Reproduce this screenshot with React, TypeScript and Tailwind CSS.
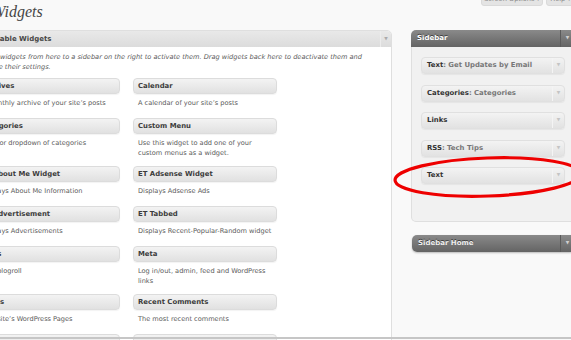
import React from "react";

type Widget = { title: string; desc: React.ReactNode; tall?: boolean };

const rows: Widget[][] = [
  [
    { title: "Archives", desc: "A monthly archive of your site\u2019s posts" },
    { title: "Calendar", desc: "A calendar of your site\u2019s posts" },
  ],
  [
    { title: "Categories", desc: "A list or dropdown of categories" },
    {
      title: "Custom Menu",
      desc: (
        <>
          Use this widget to add one of your
          <br />
          custom menus as a widget.
        </>
      ),
      tall: true,
    },
  ],
  [
    { title: "ET About Me Widget", desc: "Displays About Me Information" },
    { title: "ET Adsense Widget", desc: "Displays Adsense Ads" },
  ],
  [
    { title: "ET Advertisement", desc: "Displays Advertisements" },
    { title: "ET Tabbed", desc: "Displays Recent-Popular-Random widget" },
  ],
  [
    { title: "Links", desc: "Your blogroll" },
    {
      title: "Meta",
      desc: (
        <>
          Log in/out, admin, feed and WordPress
          <br />
          links
        </>
      ),
      tall: true,
    },
  ],
  [
    { title: "Pages", desc: "Your site\u2019s WordPress Pages" },
    { title: "Recent Comments", desc: "The most recent comments" },
  ],
  [
    { title: "", desc: "" },
    { title: "", desc: "" },
  ],
];

function WidgetCell({ w }: { w: Widget }) {
  return (
    <div className="flex flex-col">
      <div className="h-[16px] rounded-[4px] border border-[#dcdcdc] bg-linear-to-b from-[#f3f3f3] to-[#e1e1e1] shadow-[0_1px_1px_rgba(0,0,0,0.05)] flex items-center pl-[4px] text-[6.9px] font-bold text-[#3c3c3c] whitespace-nowrap">
        {w.title}
      </div>
      <div
        className={`${w.tall ? "h-[32px]" : "h-[24px]"} pt-[4px] pl-[5px] text-[6.6px] leading-[10px] text-[#5a5a5a] whitespace-nowrap`}
      >
        {w.desc}
      </div>
    </div>
  );
}

function SideWidget({ name, sub }: { name: string; sub?: string }) {
  return (
    <div className="h-[17px] rounded-[4px] border border-[#e0e0e0] bg-linear-to-b from-[#f3f3f3] to-[#e2e2e2] shadow-[0_1px_1px_rgba(0,0,0,0.05)] flex items-stretch">
      <div className="flex-1 flex items-center pl-[5px] text-[6.9px] font-bold text-[#333] whitespace-nowrap">
        {name}
        {sub && <span className="text-[#777]">: {sub}</span>}
      </div>
      <div className="w-[12px] border-l border-[#f4f4f4] flex items-center justify-center text-[4.5px] text-[#c4c4c4]">
        ▼
      </div>
    </div>
  );
}

export default function App() {
  return (
    <div
      className="relative w-[571px] h-[340px] overflow-hidden bg-[#f9f9f9]"
      style={{ fontFamily: '"DejaVu Sans", Verdana, sans-serif' }}
    >
      {/* Top row */}
      <div className="h-[30px] flex justify-between items-start">
        <div
          className="ml-[-8px] pt-[3.5px] text-[16px] leading-[16px] italic text-[#464646]"
          style={{ fontFamily: '"Liberation Serif", Georgia, serif' }}
        >
          Widgets
        </div>
        <div className="flex gap-[3px] mr-[-4px]">
          <div className="mt-[-7px] h-[13px] w-[62px] rounded-b-[3px] bg-[#e4e4e4] border border-[#dadada] flex items-center justify-center text-[6.6px] text-[#888] whitespace-nowrap">
            Screen Options ▾
          </div>
          <div className="mt-[-7px] h-[13px] w-[29px] rounded-b-[3px] bg-[#e4e4e4] border border-[#dadada] flex items-center justify-center text-[6.6px] text-[#888]">
            Help ▾
          </div>
        </div>
      </div>

      {/* Main */}
      <div className="flex items-start">
        {/* Available widgets panel */}
        <div className="ml-[-32px] w-[424px] shrink-0 h-[320px] border border-[#dfdfdf] rounded-t-[5px] bg-white flex flex-col">
          <div className="h-[16px] shrink-0 rounded-t-[4px] bg-linear-to-b from-[#e9e9e9] to-[#dcdcdc] flex items-stretch">
            <div className="flex-1 flex items-center pl-[11.5px] text-[7px] font-bold text-[#464646] whitespace-nowrap">
              Available Widgets
            </div>
            <div className="w-[11px] border-l border-[#ececec] flex items-center justify-center text-[4.5px] text-[#aaa]">
              ▼
            </div>
          </div>
          <div className="pl-[13px] pt-[4.5px] text-[6.6px] leading-[10px] italic text-[#5a5a5a] whitespace-nowrap">
            Drag widgets from here to a sidebar on the right to activate them. Drag widgets back here to deactivate them and
            <br />
            delete their settings.
          </div>
          <div className="pl-[7px] pt-[6.5px] grid grid-cols-[144px_144px] gap-x-[13px] items-start">
            {rows.map((r, i) => (
              <React.Fragment key={i}>
                <WidgetCell w={r[0]} />
                <WidgetCell w={r[1]} />
              </React.Fragment>
            ))}
          </div>
        </div>

        {/* Sidebars column */}
        <div className="ml-[19px] w-[164px] shrink-0 flex flex-col">
          <div className="h-[17px] rounded-t-[5px] bg-linear-to-b from-[#8a8a8a] to-[#646464] flex items-stretch">
            <div className="flex-1 flex items-center pl-[6px] text-[7px] font-bold text-white [text-shadow:0_-1px_0_#3f3f3f]">
              Sidebar
            </div>
            <div className="w-[14px] mr-[1px] border-l border-[#5a5a5a] flex items-center justify-center text-[4.5px] text-[#cfcfcf]">
              ▼
            </div>
          </div>
          <div className="h-[175px] bg-[#f1f1f1] border border-t-0 border-[#dfdfdf] rounded-b-[5px] pl-[9px] pt-[10px] pr-[9px]">
            <div className="w-[144px] flex flex-col gap-[10.5px]">
              <SideWidget name="Text" sub="Get Updates by Email" />
              <SideWidget name="Categories" sub="Categories" />
              <SideWidget name="Links" />
              <SideWidget name="RSS" sub="Tech Tips" />
              <SideWidget name="Text" />
            </div>
          </div>
          <div className="mt-[13px] ml-[1px] h-[17px] rounded-[5px] bg-linear-to-b from-[#8a8a8a] to-[#646464] shadow-[0_1px_2px_rgba(0,0,0,0.25)] flex items-stretch">
            <div className="flex-1 flex items-center pl-[6px] text-[7px] font-bold text-[#eeeeee] [text-shadow:0_-1px_0_#3f3f3f]">
              Sidebar Home
            </div>
            <div className="w-[14px] mr-[1px] border-l border-[#5a5a5a] flex items-center justify-center text-[4.5px] text-[#cfcfcf]">
              ▼
            </div>
          </div>
        </div>
      </div>

      {/* Red highlight ellipse */}
      <svg
        className="absolute left-[390px] top-[153px]"
        width="200"
        height="50"
        viewBox="0 0 200 50"
      >
        <ellipse
          cx="98"
          cy="24"
          rx="93"
          ry="19"
          fill="none"
          stroke="#ee0000"
          strokeWidth="3.2"
          transform="rotate(-2 98 24)"
        />
      </svg>

      {/* bottom window edge */}
      <div className="absolute left-0 right-0 bottom-[1px] h-[2px] bg-[#c6c6c6]" />
    </div>
  );
}
